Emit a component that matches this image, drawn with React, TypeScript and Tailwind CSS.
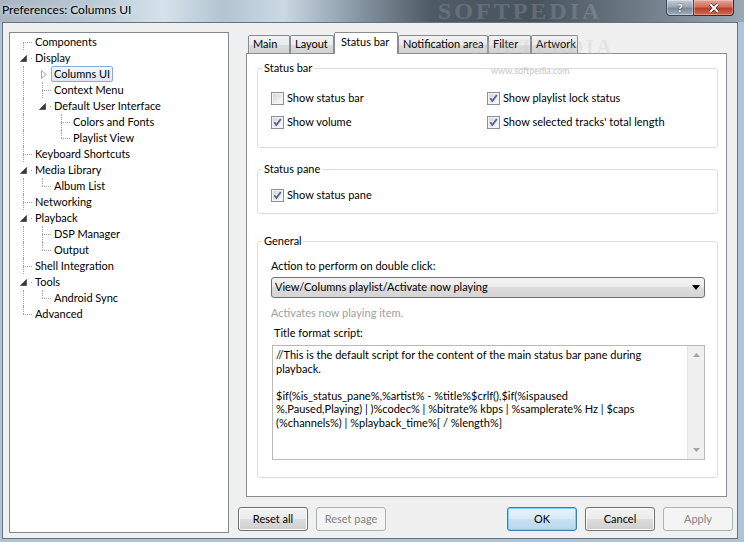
import React from 'react';

type Row = {
  label: string;
  guides: boolean[];
  first?: boolean;
  last?: boolean;
  exp?: 'open' | 'closed';
  selected?: boolean;
};

const tree: Row[] = [
  { label: 'Components', guides: [], first: true },
  { label: 'Display', guides: [], exp: 'open' },
  { label: 'Columns UI', guides: [true], exp: 'closed', selected: true },
  { label: 'Context Menu', guides: [true] },
  { label: 'Default User Interface', guides: [true], last: true, exp: 'open' },
  { label: 'Colors and Fonts', guides: [true, false] },
  { label: 'Playlist View', guides: [true, false], last: true },
  { label: 'Keyboard Shortcuts', guides: [] },
  { label: 'Media Library', guides: [], exp: 'open' },
  { label: 'Album List', guides: [true], last: true },
  { label: 'Networking', guides: [] },
  { label: 'Playback', guides: [], exp: 'open' },
  { label: 'DSP Manager', guides: [true] },
  { label: 'Output', guides: [true], last: true },
  { label: 'Shell Integration', guides: [] },
  { label: 'Tools', guides: [], exp: 'open' },
  { label: 'Android Sync', guides: [true], last: true },
  { label: 'Advanced', guides: [], last: true },
];

const tabs = [
  { label: 'Main', w: 'w-[42px]' },
  { label: 'Layout', w: 'w-[44px]' },
  { label: 'Status bar', w: 'w-[64px]', sel: true },
  { label: 'Notification area', w: 'w-[90px]' },
  { label: 'Filter', w: 'w-[43px]' },
  { label: 'Artwork', w: 'w-[47px]' },
];

const script = [
  '//This is the default script for the content of the main status bar pane during',
  'playback.',
  '',
  '$if(%is_status_pane%,%artist% - %title%$crlf(),$if(%ispaused',
  '%,Paused,Playing) | )%codec% | %bitrate% kbps | %samplerate% Hz | $caps',
  '(%channels%) | %playback_time%[ / %length%]',
];

const Connector = ({ row }: { row: Row }) => {
  if (row.exp === 'open')
    return (
      <div className="w-[19px] h-[16px] shrink-0 flex items-center">
        <svg width="7" height="7" viewBox="0 0 7 7" className="ml-[7px]">
          <path d="M6.5 0.5V6.5H0.5Z" fill="#383838" stroke="#5c5c5c" strokeLinejoin="round" />
        </svg>
        <div className="ml-auto w-px h-px bg-[#a0a0a0]" />
      </div>
    );
  if (row.exp === 'closed')
    return (
      <div className="w-[19px] h-[16px] shrink-0 flex items-center">
        <svg width="6" height="9" viewBox="0 0 6 9" className="ml-[9px]">
          <path d="M0.5 0.5L5.2 4.5L0.5 8.5Z" fill="#fff" stroke="#a6a6a6" strokeLinejoin="round" />
        </svg>
      </div>
    );
  return (
    <div className="w-[19px] h-[16px] shrink-0 flex flex-col pl-[10px]">
      <div className={row.first ? 'h-[8px]' : 'h-[8px] border-l border-dotted border-[#a0a0a0]'} />
      <div
        className={
          row.last
            ? 'h-[8px] border-t border-dotted border-[#a0a0a0]'
            : 'h-[8px] border-t border-l border-dotted border-[#a0a0a0]'
        }
      />
    </div>
  );
};

const TreeRow = ({ row }: { row: Row }) => (
  <div className="flex h-[16px] items-center">
    {row.guides.map((g, i) => (
      <div key={i} className="w-[19px] h-[16px] shrink-0 pl-[10px]">
        {g && <div className="h-full border-l border-dotted border-[#a0a0a0]" />}
      </div>
    ))}
    <Connector row={row} />
    <span
      className={
        row.selected
          ? 'h-[16px] px-[2px] border rounded-[2px] leading-[14px] whitespace-nowrap border-[#84acdd] bg-[linear-gradient(#f1f7fe,#dae8f9)]'
          : 'h-[16px] px-[2px] border rounded-[2px] leading-[14px] whitespace-nowrap border-transparent'
      }
    >
      {row.label}
    </span>
  </div>
);

const Check = ({ on }: { on: boolean }) => (
  <svg width="13" height="13" viewBox="0 0 13 13" className="shrink-0">
    <defs>
      <linearGradient id="cbfill" x1="0" y1="0" x2="1" y2="1">
        <stop offset="0" stopColor="#d6d6d6" />
        <stop offset="1" stopColor="#fafafa" />
      </linearGradient>
    </defs>
    <rect x="0.5" y="0.5" width="12" height="12" fill="#f4f4f4" stroke="#8e8f8f" />
    <rect x="2" y="2" width="9" height="9" fill="url(#cbfill)" />
    {on && <path d="M3.3 6.3L5.4 9.1L9.8 2.9" fill="none" stroke="#4a5f97" strokeWidth="1.7" />}
  </svg>
);

const CheckItem = ({ on, label }: { on: boolean; label: string }) => (
  <div className="flex items-center gap-[3px] h-[16px] whitespace-nowrap">
    <Check on={on} />
    <span>{label}</span>
  </div>
);

const Group = ({ title, className, children }: { title: string; className: string; children: React.ReactNode }) => (
  <div className={className}>
    <span className="absolute -top-[9px] left-[4px] px-[2px] bg-white leading-[16px]">{title}</span>
    {children}
  </div>
);

const Button = ({ label, kind }: { label: string; kind?: 'default' | 'disabled' }) => {
  const cls =
    kind === 'default'
      ? 'border-[#3c7fb1] bg-[linear-gradient(#e6f3fb_0%,#d8ebf7_50%,#c6e1f3_50%,#b9d8ee_100%)] shadow-[inset_0_0_0_1px_#7fd0f7]'
      : kind === 'disabled'
      ? 'border-[#adb2b5] bg-[#f4f4f4] text-[#838383]'
      : 'border-[#707070] bg-[linear-gradient(#f2f2f2_0%,#ebebeb_50%,#dddddd_50%,#cfcfcf_100%)] shadow-[inset_0_0_0_1px_#fbfbfb]';
  return (
    <div className={`w-[70px] h-[24px] border rounded-[3px] flex items-center justify-center ${cls}`}>{label}</div>
  );
};

export default function App() {
  return (
    <div className="w-[744px] h-[542px] overflow-hidden flex flex-col bg-[#afc4d8] text-[11px] text-black [font-family:Lato,'Liberation_Sans',sans-serif]">
      {/* title bar */}
      <div className="relative h-[22px] shrink-0 flex items-start justify-between bg-[linear-gradient(90deg,#a7b5c1_0%,#b9c8d4_12%,#d5e2eb_22%,#b3c4d1_30%,#cad9e4_38%,#8797a3_48%,#4e5a65_58%,#47535d_72%,#6f7c87_86%,#9aa8b3_100%)]">
        <span className="pl-[2px] pt-[3px] text-[12px] leading-[14px] [text-shadow:0_0_5px_rgba(255,255,255,0.9)]">
          Preferences: Columns UI
        </span>
        <span className="absolute left-[438px] top-0 text-[24px] leading-[22px] font-bold tracking-[3px] text-white/[0.14] [font-family:'Liberation_Serif',serif] pointer-events-none">
          SOFTPEDIA
        </span>
        <div className="flex mr-[10px]">
          <div className="w-[28px] h-[16px] border border-t-0 border-[#3a4754] rounded-bl-[4px] bg-[linear-gradient(#c3ced8,#9aa8b6_45%,#7a8997_55%,#9fb0bf)] shadow-[inset_0_0_0_1px_rgba(255,255,255,0.35)] flex items-center justify-center text-white font-bold text-[12px] leading-none [text-shadow:0_0_2px_#223]">
            ?
          </div>
          <div className="w-[40px] h-[16px] border border-t-0 border-l-0 border-[#3a2a2a] rounded-br-[4px] bg-[linear-gradient(#e3a597,#d0705c_45%,#bb3f26_55%,#d06a4f)] shadow-[inset_0_0_0_1px_rgba(255,255,255,0.3)] flex items-center justify-center">
            <svg width="12" height="10" viewBox="0 0 12 10">
              <path d="M2 1L10 9M10 1L2 9" stroke="#3a2a2a" strokeWidth="3.4" />
              <path d="M2 1L10 9M10 1L2 9" stroke="#fff" strokeWidth="2" />
            </svg>
          </div>
        </div>
      </div>

      {/* window body */}
      <div className="flex-1 pl-[2px] pr-[6px] pb-[3px] flex">
        <div className="flex-1 flex border border-[#66727e] bg-[#f0f0f0] pl-[6px]">
          {/* tree */}
          <div className="w-[220px] h-[501px] mt-[9px] border border-[#828790] bg-white pt-[1px] pl-[3px] shrink-0">
            {tree.map((r) => (
              <TreeRow key={r.label} row={r} />
            ))}
          </div>

          {/* right column */}
          <div className="relative w-[495px] ml-[9px] pt-[9px] flex flex-col">
            <div className="flex items-end h-[21px] pl-[10px]">
              {tabs.map((t) =>
                t.sel ? (
                  <div
                    key={t.label}
                    className={`${t.w} relative z-10 h-[22px] -mb-px border border-b-0 border-[#898c95] bg-white rounded-t-[2px] pl-[6px] pb-[3px] flex items-center whitespace-nowrap`}
                  >
                    {t.label}
                  </div>
                ) : (
                  <div
                    key={t.label}
                    className={`${t.w} h-[18px] border border-b-0 border-[#898c95] rounded-t-[2px] bg-[linear-gradient(#f2f2f2_0%,#ebebeb_50%,#dddddd_50%,#d2d2d2_100%)] pl-[4px] flex items-center whitespace-nowrap`}
                  >
                    {t.label}
                  </div>
                )
              )}
            </div>

            <div className="ml-[8px] w-[481px] h-[444px] border border-[#898c95] bg-white flex flex-col pl-[10px]">
              <Group title="Status bar" className="relative mt-[14px] w-[461px] h-[80px] border border-[#d5dfe5] rounded-[3px] pt-[21px] pl-[13px]">
                <div className="grid grid-cols-[216px_1fr] gap-y-[8px]">
                  <CheckItem on={false} label="Show status bar" />
                  <CheckItem on label="Show playlist lock status" />
                  <CheckItem on label="Show volume" />
                  <CheckItem on label="Show selected tracks' total length" />
                </div>
              </Group>

              <Group title="Status pane" className="relative mt-[21px] w-[461px] h-[45px] border border-[#d5dfe5] rounded-[3px] pt-[17px] pl-[13px]">
                <CheckItem on label="Show status pane" />
              </Group>

              <Group title="General" className="relative mt-[27px] w-[461px] h-[237px] border border-[#d5dfe5] rounded-[3px] pt-[16px] pl-[13px] flex flex-col">
                <div className="h-[16px] leading-[16px]">Action to perform on double click:</div>
                <div className="mt-[3px] w-[434px] h-[21px] border border-[#707070] rounded-[3px] bg-[linear-gradient(#f3f3f3_0%,#ebebeb_50%,#dddddd_50%,#d4d4d4_100%)] flex items-center justify-between pl-[3px] pr-[4px]">
                  <span>View/Columns playlist/Activate now playing</span>
                  <svg width="8" height="5" viewBox="0 0 8 5">
                    <path d="M0 0H8L4 5Z" fill="#000" />
                  </svg>
                </div>
                <div className="mt-[7px] h-[16px] leading-[16px] text-[#a0a0a0]">Activates now playing item.</div>
                <div className="mt-[4px] h-[16px] leading-[16px] pl-[3px]">Title format script:</div>
                <div className="mt-[4px] ml-[1px] w-[433px] h-[115px] border border-[#b9b9b9] bg-white flex">
                  <div className="flex-1 pl-[3px] pt-[2px] leading-[13.5px] whitespace-pre">
                    {script.map((l, i) => (
                      <div key={i} className="h-[13.5px]">
                        {l}
                      </div>
                    ))}
                  </div>
                  <div className="w-[17px] bg-[#f0f0f0] border-l border-[#e4e4e4] flex flex-col justify-between items-center py-[7px]">
                    <svg width="7" height="4" viewBox="0 0 7 4">
                      <path d="M0 4L3.5 0L7 4Z" fill="#a3a3a3" />
                    </svg>
                    <svg width="7" height="4" viewBox="0 0 7 4">
                      <path d="M0 0H7L3.5 4Z" fill="#a3a3a3" />
                    </svg>
                  </div>
                </div>
              </Group>
            </div>

            <div className="mt-[10px] flex h-[24px]">
              <div className="flex gap-[8px]">
                <Button label="Reset all" />
                <Button label="Reset page" kind="disabled" />
              </div>
              <div className="ml-auto flex gap-[8px]">
                <Button label="OK" kind="default" />
                <Button label="Cancel" />
                <Button label="Apply" kind="disabled" />
              </div>
            </div>

            {/* watermark */}
            <span className="absolute left-[232px] top-[12px] text-[22px] leading-[24px] font-bold tracking-[2px] text-[#c8c8c8]/30 [font-family:'Liberation_Serif',serif] pointer-events-none">
              SOFTPEDIA
            </span>
            <span className="absolute left-[253px] top-[43px] text-[9px] leading-[10px] text-[#c6c6c6] pointer-events-none">
              www.softpedia.com
            </span>
          </div>
        </div>
      </div>
    </div>
  );
}
